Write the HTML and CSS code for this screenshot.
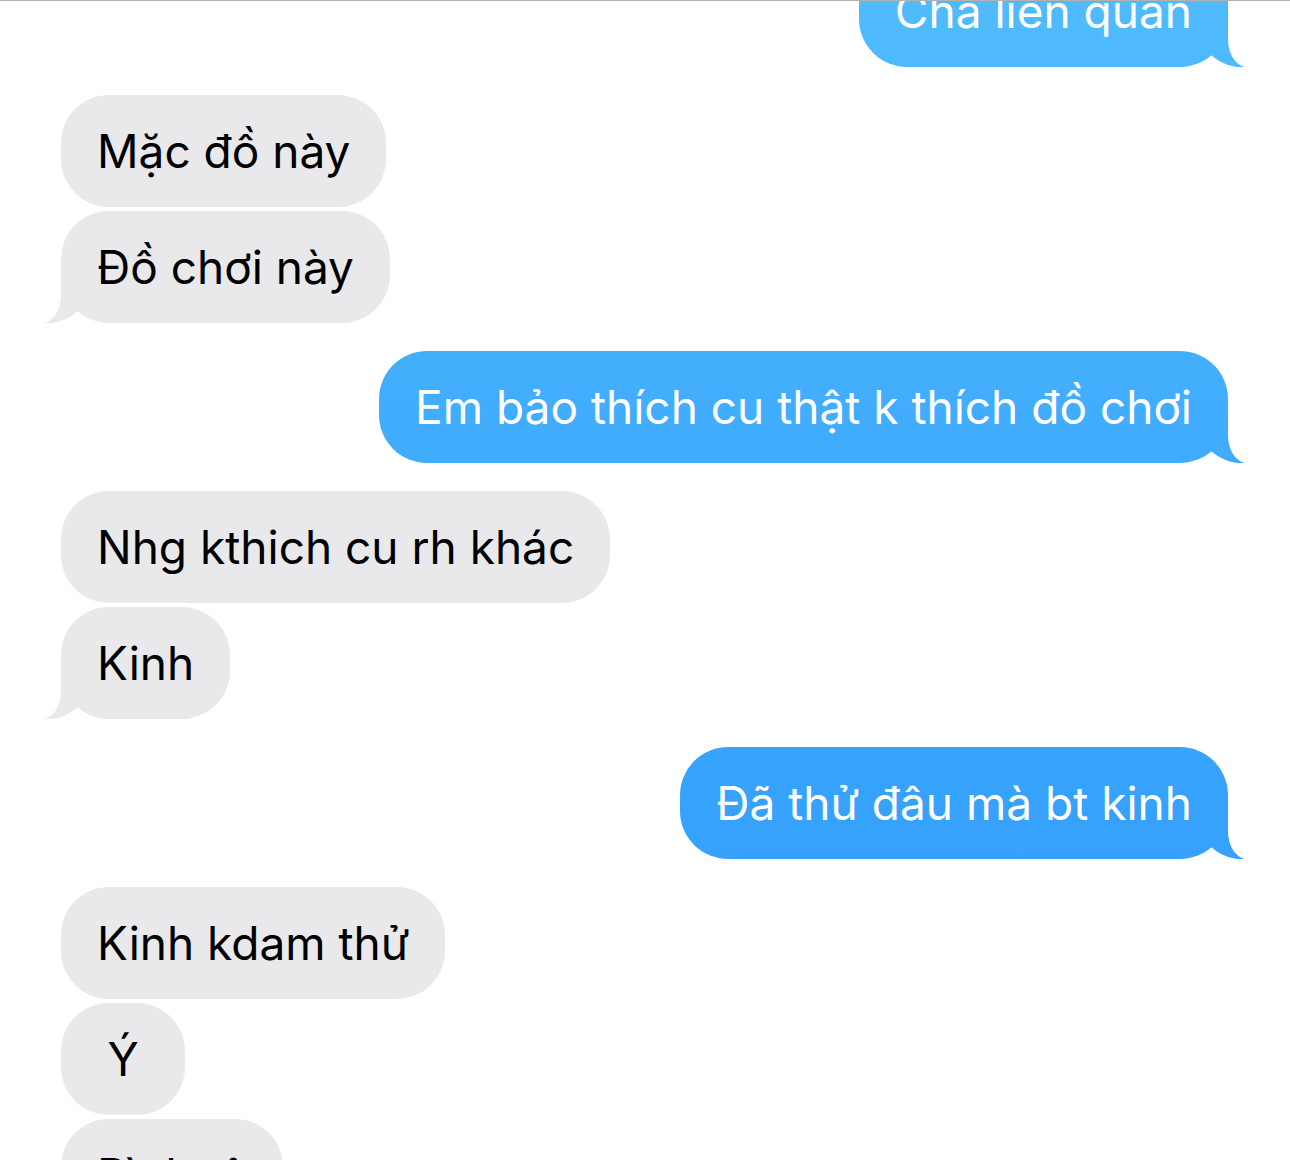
FILE: index.html
```html
<!DOCTYPE html>
<html lang="vi">
<head>
<meta charset="utf-8">
<title>Messages</title>
<link rel="stylesheet" href="styles.css">
</head>
<body>
<div class="thread">
  <div class="group me">
    <div class="bubble tail">Cha liên quan<span class="tail-shape"></span></div>
  </div>
  <div class="group them">
    <div class="bubble">Mặc đồ này</div>
    <div class="bubble tail">Đồ chơi này<span class="tail-shape"></span></div>
  </div>
  <div class="group me">
    <div class="bubble tail">Em bảo thích cu thật k thích đồ chơi<span class="tail-shape"></span></div>
  </div>
  <div class="group them">
    <div class="bubble">Nhg kthich cu rh khác</div>
    <div class="bubble tail">Kinh<span class="tail-shape"></span></div>
  </div>
  <div class="group me">
    <div class="bubble tail">Đã thử đâu mà bt kinh<span class="tail-shape"></span></div>
  </div>
  <div class="group them">
    <div class="bubble">Kinh kdam thử</div>
    <div class="bubble short">Ý</div>
    <div class="bubble">Bình tâ</div>
  </div>
</div>
</body>
</html>
```

FILE: styles.css
```css
html, body {
  margin: 0;
  padding: 0;
  background: #ffffff;
}
body {
  width: 1290px;
  height: 1160px;
  overflow: hidden;
  border-top: 1px solid #b1b1b1;
  box-sizing: border-box;
  font-family: Inter, "Noto Sans", "Liberation Sans", sans-serif;
}
.thread {
  display: flex;
  flex-direction: column;
  gap: 28px;
  padding: 0 62px 0 61px;
  margin-top: -46px;
}
.group {
  display: flex;
  flex-direction: column;
  gap: 4px;
}
.group.them { align-items: flex-start; }
.group.me { align-items: flex-end; }
.bubble {
  position: relative;
  height: 112px;
  box-sizing: border-box;
  padding: 0 36px;
  border-radius: 48px;
  font-size: 46px;
  line-height: 112px;
  white-space: nowrap;
}
.them .bubble {
  background: #e9e9eb;
  color: #000000;
}
.me .bubble {
  color: #ffffff;
}
.me .bubble,
.me .tail-shape {
  background: linear-gradient(to bottom, #50bbfc 0px, #41adfc 410px, #37a2fb 800px, #3399fa 1160px) fixed;
}
.bubble.short {
  min-width: 124px;
  text-align: center;
  padding: 0;
}
.tail-shape {
  position: absolute;
  bottom: 0;
  width: 60px;
  height: 50px;
}
.them .tail-shape {
  left: -17px;
  background: #e9e9eb;
  clip-path: path("M17 0 L17 22 C17 38 9 48 0 50 C13 51 25 46 34 38 L50 0 Z");
}
.me .tail-shape {
  right: -17px;
  clip-path: path("M43 0 L43 22 C43 38 51 48 60 50 C47 51 35 46 26 38 L10 0 Z");
}
```
